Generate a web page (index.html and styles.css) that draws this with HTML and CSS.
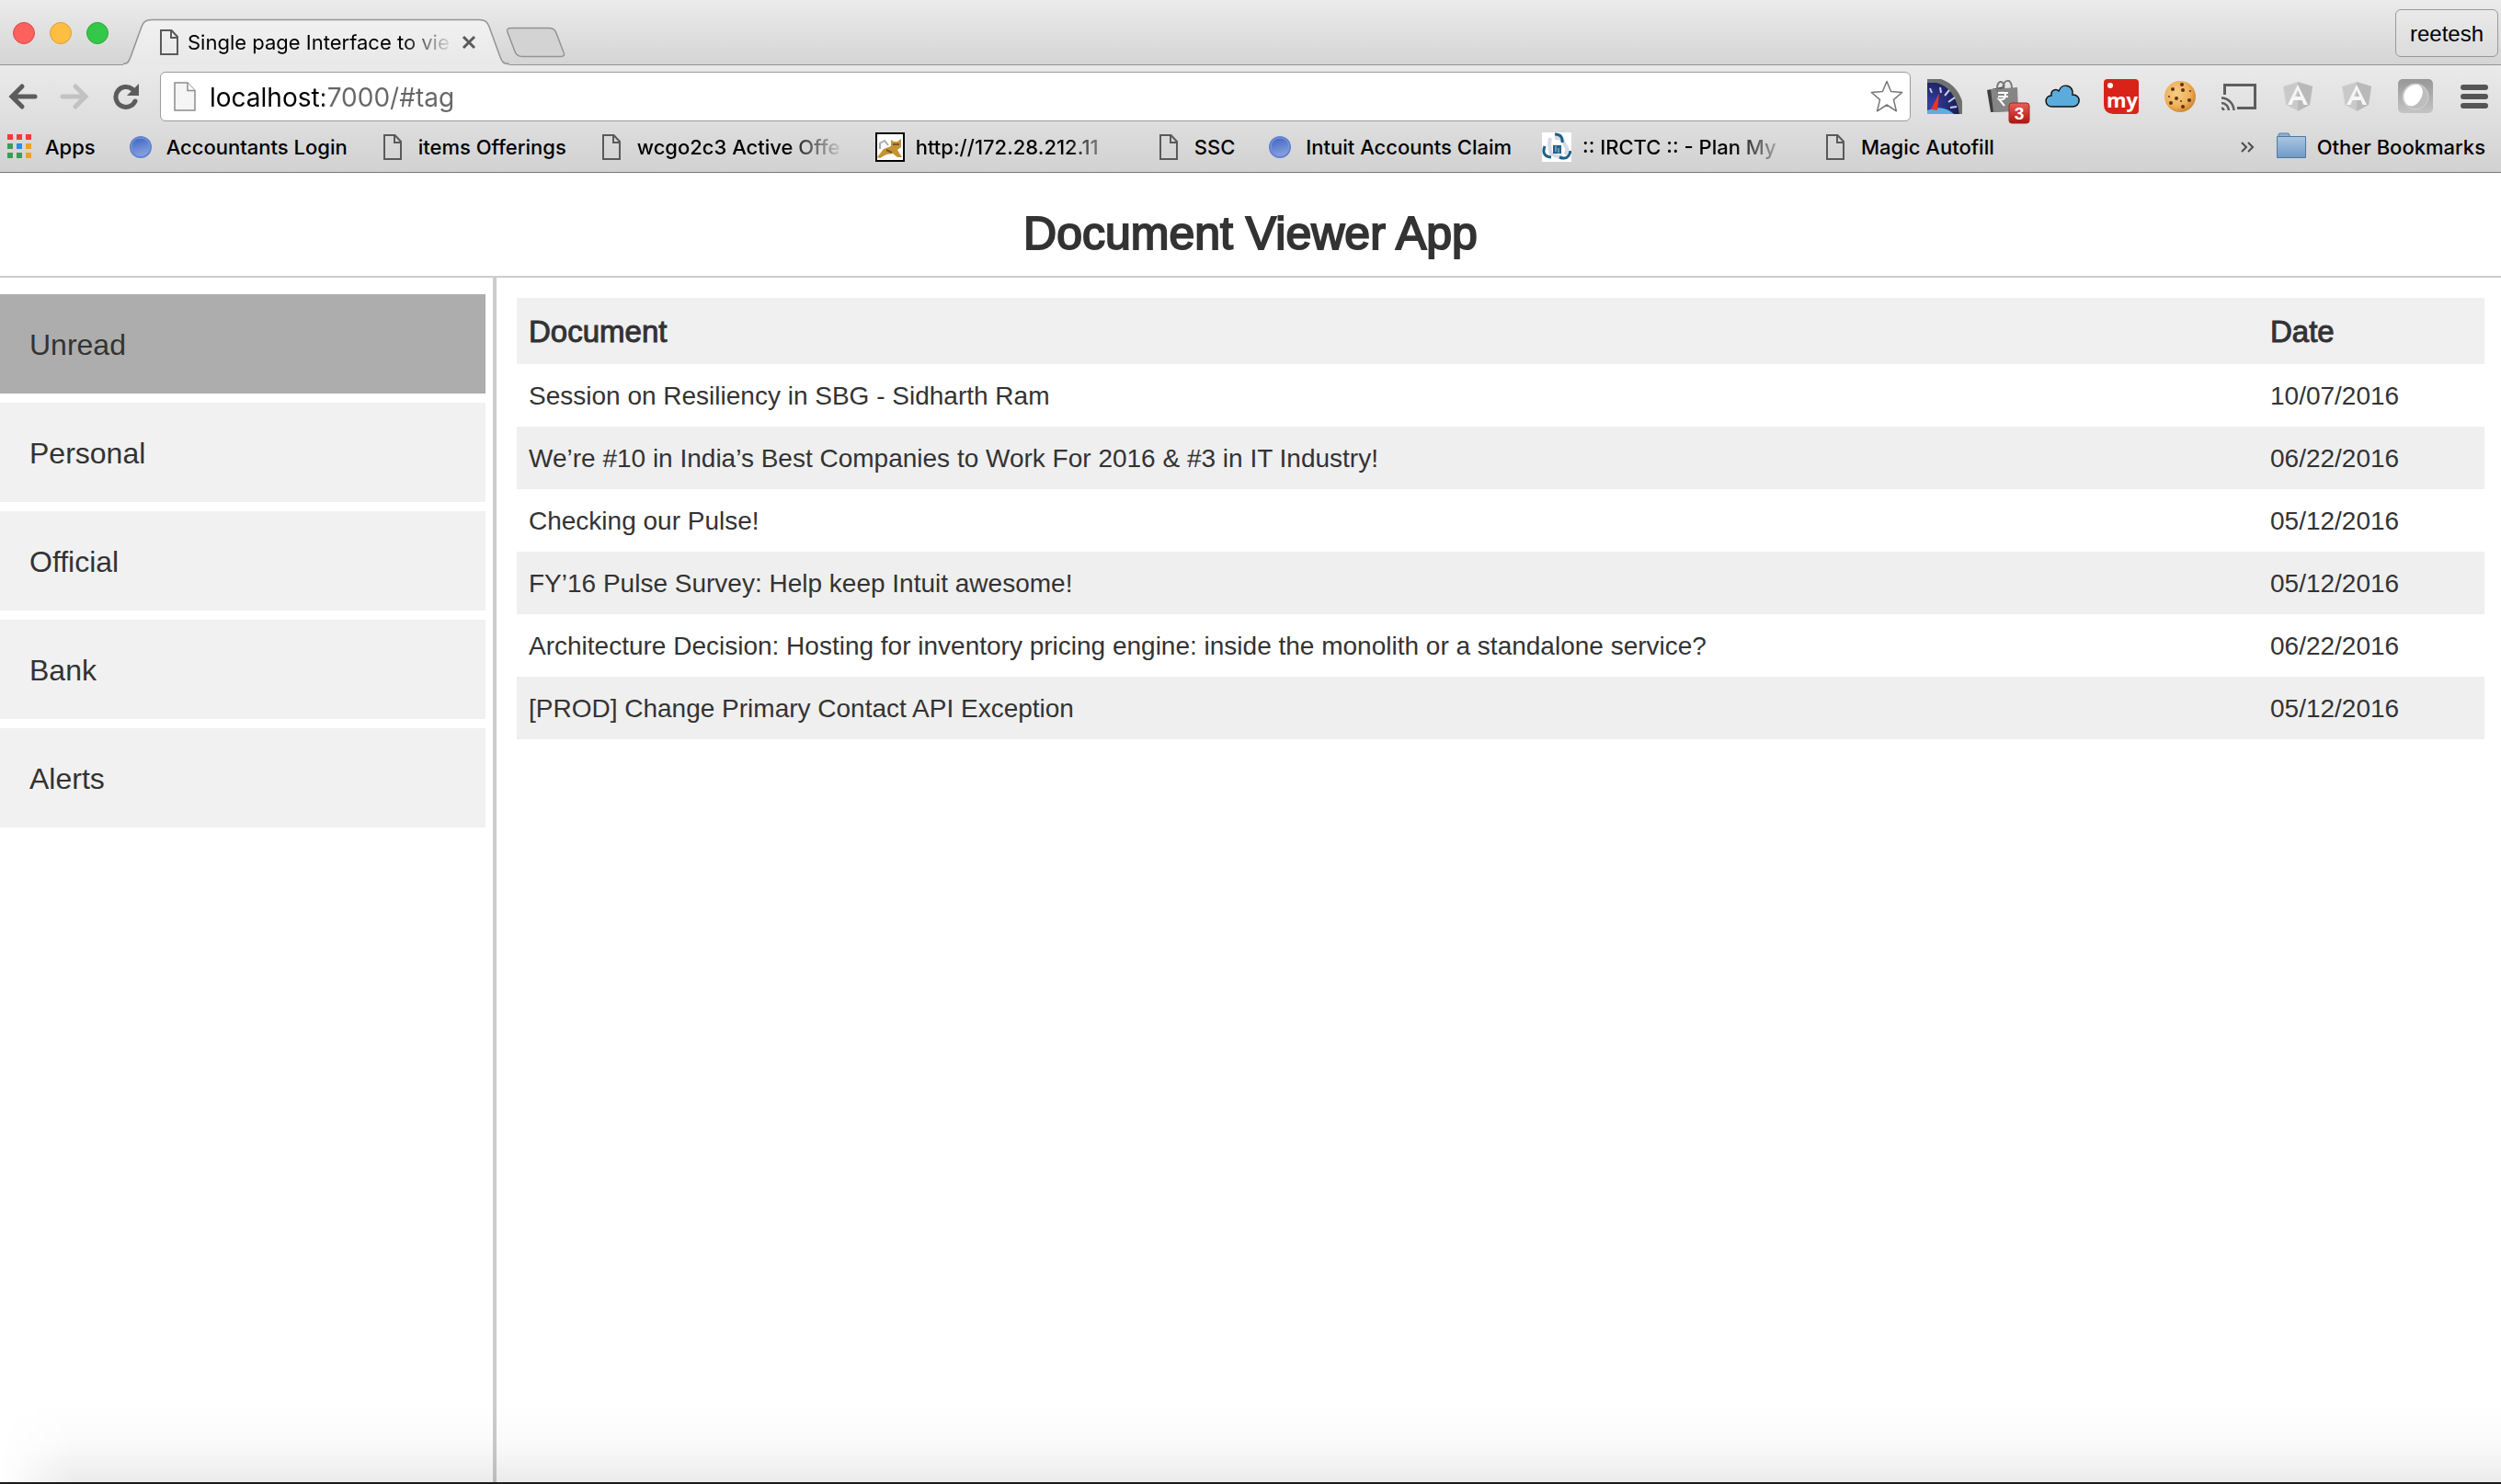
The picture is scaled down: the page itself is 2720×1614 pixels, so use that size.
FILE: index.html
```html
<!DOCTYPE html>
<html lang="en">
<head>
<meta charset="utf-8">
<title>Single page Interface to view documents</title>
<link rel="stylesheet" href="styles.css">
</head>
<body>
<svg class="defs" width="0" height="0" aria-hidden="true">
  <defs>
    <linearGradient id="ball" x1="0" y1="0" x2="0.3" y2="1"><stop offset="0" stop-color="#3d62bf"/><stop offset="1" stop-color="#839fe0"/></linearGradient>
    <linearGradient id="folder" x1="0" y1="0" x2="0" y2="1"><stop offset="0" stop-color="#abc6e2"/><stop offset="1" stop-color="#6f9ac6"/></linearGradient>
    <linearGradient id="tabfill" x1="0" y1="0" x2="0" y2="1"><stop offset="0" stop-color="#f1f1f1"/><stop offset="1" stop-color="#e8e8e8"/></linearGradient>
    <linearGradient id="badge" x1="0" y1="0" x2="0" y2="1"><stop offset="0" stop-color="#e8605a"/><stop offset="1" stop-color="#b3120f"/></linearGradient>
    <linearGradient id="orb" x1="0" y1="0" x2="0" y2="1"><stop offset="0" stop-color="#979797"/><stop offset="1" stop-color="#c4c4c4"/></linearGradient>
    <radialGradient id="dial" cx="0.1" cy="0.7" r="0.9"><stop offset="0" stop-color="#3440a8"/><stop offset="1" stop-color="#1a1c52"/></radialGradient>
    <radialGradient id="cookie" cx="0.4" cy="0.4" r="0.6"><stop offset="0" stop-color="#f8cd85"/><stop offset="0.7" stop-color="#eeb05a"/><stop offset="1" stop-color="#d58a35"/></radialGradient>
    <symbol id="doc" viewBox="0 0 32 32"><path d="M7 3H18.500L25 10V29H7Z" fill="none" stroke="#5a5a5a" stroke-width="2"/><path d="M18 3V11H25" fill="none" stroke="#5a5a5a" stroke-width="2"/></symbol>
    <symbol id="globe" viewBox="0 0 32 32"><circle cx="16" cy="16" r="12" fill="#5f80cf"/><circle cx="16" cy="16" r="10" fill="url(#ball)" stroke="#7b97dd"/></symbol>
    <symbol id="shield" viewBox="0 0 38 38"><path d="M19 3 35 8 32 28 19 35 6 28 3 8Z" fill="#c9c9c9" stroke="#dedede"/><path d="M19 3 35 8 32 28 19 35Z" fill="#b9b9b9"/><path d="M19 6 8 28H12.500L14.500 23H23.500L25.500 28H30ZM19 12 22 19H16Z" fill="#f6f6f6" fill-rule="evenodd"/></symbol>
  </defs>
</svg>

<header class="browser">
  <div class="tabstrip">
    <div class="lights"><button class="light red" aria-label="Close window"></button><button class="light amber" aria-label="Minimise window"></button><button class="light green" aria-label="Zoom window"></button></div>
    <div class="tab">
      <svg class="tab-shape" viewBox="0 0 420 51" aria-hidden="true"><path d="M0 49.500C5 49.500 6 47 8 42L20 9C22 4 24 1.500 31 1.500H387C394 1.500 396 4 398 9L410 42C412 47 413 49.500 420 49.500V51H0Z" fill="url(#tabfill)"/><path d="M0 49.500C5 49.500 6 47 8 42L20 9C22 4 24 1.500 31 1.500H387C394 1.500 396 4 398 9L410 42C412 47 413 49.500 420 49.500" fill="none" stroke="#949494" stroke-width="1.500"/></svg>
      <svg class="slot" aria-hidden="true"><use href="#doc"/></svg>
      <span class="tab-title">Single page Interface to vie</span>
      <button class="tab-close" aria-label="Close tab"><svg width="16" height="16" viewBox="0 0 16 16"><path d="M2 2 14 14M14 2 2 14" stroke="#5a5a5a" stroke-width="3"/></svg></button>
    </div>
    <button class="new-tab" aria-label="New tab"><svg width="66" height="34" viewBox="0 0 66 34"><path d="M6 1.500H47Q53 1.500 55 7L63 28Q65 32.500 60 32.500H18Q12 32.500 10 27L2 6Q0 1.500 6 1.500Z" fill="#d3d3d3" stroke="#949494" stroke-width="1.500"/></svg></button>
    <button class="profile">reetesh</button>
  </div>

  <div class="toolbar">
    <div class="nav">
      <button aria-label="Back"><svg width="34" height="30" viewBox="0 0 34 30"><path d="M30 15H6M16 4 5 15 16 26" fill="none" stroke="#5c5c5c" stroke-width="5" stroke-linecap="round" stroke-linejoin="miter"/></svg></button>
      <button aria-label="Forward"><svg width="34" height="30" viewBox="0 0 34 30"><path d="M4 15H28M18 4 29 15 18 26" fill="none" stroke="#c2c2c2" stroke-width="5" stroke-linecap="round" stroke-linejoin="miter"/></svg></button>
      <button aria-label="Reload"><svg width="34" height="30" viewBox="0 0 34 30"><path d="M27 20A11 11 0 1 1 24 7" fill="none" stroke="#5c5c5c" stroke-width="5" stroke-linecap="round"/><path d="M31 1V14H18Z" fill="#5c5c5c"/></svg></button>
    </div>
    <div class="omnibox">
      <svg width="24" height="32" viewBox="0 0 24 32" aria-hidden="true"><path d="M1 1H15L23 9.500V31H1Z" fill="#f5f5f5" stroke="#8c8c8c" stroke-width="1.500"/><path d="M15 1V9.500H23" fill="#fff" stroke="#8c8c8c" stroke-width="1.500"/></svg>
      <input class="url" type="text" aria-label="Address" value="localhost:7000/#tag">
      <button aria-label="Bookmark this page"><svg width="38" height="36" viewBox="0 0 38 36"><path d="M19 1.500 23.600 12.500 35.700 13.500 26.500 21.400 29.400 33.800 19 27 8.600 33.800 11.500 21.400 2.300 13.500 14.400 12.500Z" fill="#fff" stroke="#777" stroke-width="1.500" stroke-linejoin="round"/></svg></button>
    </div>
    <div class="extensions">
      <button aria-label="Speed test"><svg width="38" height="38" viewBox="0 0 38 38"><path d="M0 0H15Q32 6 38 24V38H0Z" fill="#6f716f"/><path d="M0 4H10Q30 9 35 38H0Z" fill="url(#dial)"/><path d="M0 34Q17 27 29 38H0Z" fill="#5aaee2"/><path d="M14 9 15 15M24 12 19 18M30 20 23 25M32 30 25 31M3 10 5 15" stroke="#c9cde8" stroke-width="2"/><path d="M13 15 4 33 11 34Z" fill="#e8342f"/></svg></button>
      <button aria-label="Shopping, 3 offers"><svg class="overflow" width="38" height="38" viewBox="0 0 38 38"><path d="M1 12 20 8 21 35 5 36Z" fill="#3d3d3d"/><path d="M5 11 34 9 35 35 8 36Z" fill="#858585"/><path d="M12 14C11 1 18 0 20 8M18 11C19-1 28-1 28 10" fill="none" stroke="#777" stroke-width="2"/><path d="M13 15H24M13 19H24M16 15Q22 14 21 19Q20 23 14 22L20 29" fill="none" stroke="#fff" stroke-width="2"/><rect x="25" y="26" width="22" height="22" rx="3" fill="url(#badge)" stroke="#a52522"/><text class="badge-text" x="36" y="44" text-anchor="middle">3</text></svg></button>
      <button aria-label="Cloud"><svg width="38" height="38" viewBox="0 0 38 38"><path d="M8 30C-1 30-1 18 7 18C6 12 12 10 15 13C19 3 32 7 30 17C40 17 39 30 30 30Z" fill="#5cacdb" stroke="#111" stroke-width="1.500"/></svg></button>
      <button aria-label="my"><svg width="38" height="38" viewBox="0 0 38 38"><path d="M4 0H34Q38 0 38 4V34Q38 38 34 38H10Q0 37 0 28V4Q0 0 4 0Z" fill="#d92318"/><circle cx="7" cy="7" r="3" fill="#fff"/><text class="my-text" x="20" y="31" text-anchor="middle">my</text></svg></button>
      <button aria-label="Cookies"><svg width="38" height="38" viewBox="0 0 38 38"><circle cx="19" cy="19" r="17" fill="url(#cookie)"/><g fill="#5b3417"><circle cx="11" cy="11" r="2"/><circle cx="21" cy="6" r="2"/><circle cx="22" cy="12" r="2"/><circle cx="30" cy="13" r="1"/><circle cx="15" cy="21" r="2"/><circle cx="29" cy="23" r="2"/><circle cx="7" cy="19" r="1"/><circle cx="9" cy="26" r="2"/><circle cx="22" cy="30" r="2"/><circle cx="20" cy="24" r="1"/></g></svg></button>
      <button aria-label="Cast"><svg width="38" height="38" viewBox="0 0 38 38"><path d="M3.500 17V6.500H36.500V31.500H17" fill="none" stroke="#5e5e5e" stroke-width="3"/><path d="M0 31.500A3 3 0 0 1 2.500 34M0 26A8.500 8.500 0 0 1 8 34M0 20.500A14 14 0 0 1 13.500 34" fill="none" stroke="#5e5e5e" stroke-width="2.500"/></svg></button>
      <button aria-label="Angular inspector"><svg width="38" height="38"><use href="#shield"/></svg></button>
      <button aria-label="Angular debugger"><svg width="38" height="38"><use href="#shield"/></svg></button>
      <button aria-label="Orb"><svg width="38" height="38" viewBox="0 0 38 38"><rect width="38" height="37" rx="5" fill="url(#orb)"/><circle cx="19" cy="19" r="14" fill="#bdbdbd" stroke="#d4d4d4"/><path d="M9 27C2 17 10 5 21 6C31 8 27 25 17 29Q11 30 9 27Z" fill="#fff"/></svg></button>
      <button aria-label="Menu"><svg width="38" height="38" viewBox="0 0 38 38"><path d="M7 9H31M7 19H31M7 29H31" stroke="#555" stroke-width="6" stroke-linecap="round"/></svg></button>
    </div>
  </div>

  <nav class="bookmarks" aria-label="Bookmarks">
    <a href="#apps"><svg class="slot" viewBox="0 0 32 32"><g fill="#ef3b3a"><path d="M3 2h6v6H3zM13 2h6v6h-6zM23 2h6v6h-6z"/></g><path d="M3 12h6v6H3zM3 22h6v6H3zM13 22h6v6h-6z" fill="#3b9c55"/><path d="M13 12h6v6h-6z" fill="#2b8cf0"/><path d="M23 12h6v6h-6zM23 22h6v6h-6z" fill="#eda12b"/></svg><span>Apps</span></a>
    <a href="#accountants"><svg class="slot"><use href="#globe"/></svg><span>Accountants Login</span></a>
    <a href="#items"><svg class="slot"><use href="#doc"/></svg><span>items Offerings</span></a>
    <a href="#wcgo"><svg class="slot"><use href="#doc"/></svg><span class="fade">wcgo2c3 Active Offe</span></a>
    <a href="#tomcat"><svg class="slot" viewBox="0 0 32 32"><path d="M1 1H31V31H1Z" fill="#fff" stroke="#000" stroke-width="2"/><path d="M17 8 20 10H24L28 7V16L24 19 29 27H24L19 23 12 24 5 28 2 27 9 18 17 15Z" fill="#c59336"/><path d="M5 18V12L10 9 14 14" fill="none" stroke="#aaa" stroke-width="2"/><path d="M19 13H26M12 19 18 22" stroke="#725a2c" stroke-width="2"/></svg><span class="fade">http://172.28.212.11</span></a>
    <a href="#ssc"><svg class="slot"><use href="#doc"/></svg><span>SSC</span></a>
    <a href="#claim"><svg class="slot"><use href="#globe"/></svg><span>Intuit Accounts Claim</span></a>
    <a href="#irctc"><svg class="slot" viewBox="0 0 32 32"><path d="M0 0H32V32H0Z" fill="#fff"/><path d="M9 6Q7 14 10 25M24 12Q30 19 25 24M9 22Q15 27 22 26M14 6Q22 5 24 12" fill="none" stroke="#d5dae5" stroke-width="4"/><path d="M14 2Q23 2 22 11M3 15Q-1 26 10 27M31 20Q29 31 19 27" fill="none" stroke="#1d5f86" stroke-width="3"/><path d="M12 14H21V23H12Z" fill="#24608b"/><path d="M15 15V21M18 17V22" stroke="#b9cfdd"/></svg><span class="fade">:: IRCTC :: - Plan My</span></a>
    <a href="#autofill"><svg class="slot"><use href="#doc"/></svg><span>Magic Autofill</span></a>
    <button class="more" aria-label="More bookmarks"><svg width="16" height="14" viewBox="0 0 16 14"><path d="M2 2 7 7 2 12M9 2 14 7 9 12" fill="none" stroke="#4d4d4d" stroke-width="2"/></svg></button>
    <a href="#other"><svg class="slot" viewBox="0 0 32 32"><path d="M2 6V2Q2 1 4 1H12Q14 1 14 3V6" fill="#8fb0d6" stroke="#5b7ea6"/><path d="M.5 4.500H31.500V27.500H.5Z" fill="url(#folder)" stroke="#4e799f"/></svg><span>Other Bookmarks</span></a>
  </nav>
</header>

<div class="app">
  <h1>Document Viewer App</h1>
  <div class="columns">
    <nav class="tags" aria-label="Tags">
      <a class="current" href="#unread">Unread</a>
      <a href="#personal">Personal</a>
      <a href="#official">Official</a>
      <a href="#bank">Bank</a>
      <a href="#alerts">Alerts</a>
    </nav>
    <main>
      <table>
        <thead><tr><th scope="col">Document</th><th class="date" scope="col">Date</th></tr></thead>
        <tbody>
          <tr><td>Session on Resiliency in SBG - Sidharth Ram</td><td>10/07/2016</td></tr>
          <tr><td>We’re #10 in India’s Best Companies to Work For 2016 &amp; #3 in IT Industry!</td><td>06/22/2016</td></tr>
          <tr><td>Checking our Pulse!</td><td>05/12/2016</td></tr>
          <tr><td>FY’16 Pulse Survey: Help keep Intuit awesome!</td><td>05/12/2016</td></tr>
          <tr><td>Architecture Decision: Hosting for inventory pricing engine: inside the monolith or a standalone service?</td><td>06/22/2016</td></tr>
          <tr><td>[PROD] Change Primary Contact API Exception</td><td>05/12/2016</td></tr>
        </tbody>
      </table>
    </main>
  </div>
</div>
</body>
</html>
```
FILE: styles.css
```css
* { box-sizing: border-box; }

body {
  margin: 0;
  min-height: 100vh;
  display: flex;
  flex-direction: column;
  background: #fff;
  color: #333;
  font-family: "Liberation Sans", Arial, sans-serif;
  border-bottom: 2px solid #1a1a1a;
}

button {
  margin: 0;
  padding: 0;
  border: 0;
  background: none;
  font: inherit;
}

svg { display: block; flex: none; }
a { color: inherit; text-decoration: none; }
.defs { position: absolute; }
.overflow { overflow: visible; }
.slot { width: 32px; height: 32px; }

/* Browser window */
.browser {
  font-family: Inter, Roboto, sans-serif;
  font-size: 22px;
  color: #000;
  border-bottom: 1px solid #777;
}

.tabstrip {
  height: 71px;
  display: flex;
  align-items: flex-end;
  padding-right: 3px;
  background: linear-gradient(#ebebeb, #d4d4d4);
  box-shadow: inset 0 -1px #949494;
}

.lights {
  display: flex;
  gap: 16px;
  padding: 0 0 23px 14px;
  width: 134px;
}

.light { width: 24px; height: 24px; border-radius: 50%; border: 1px solid; }
.red { background: #fc615d; border-color: #e04845; }
.amber { background: #fdbe41; border-color: #dea035; }
.green { background: #34c84a; border-color: #28ab36; }

.tab {
  position: relative;
  width: 420px;
  height: 51px;
  display: flex;
  align-items: center;
  padding: 0 36px 0 34px;
}

.tab-shape { position: absolute; left: 0; top: 0; width: 100%; height: 100%; }
.tab .slot { position: relative; }

.tab-title {
  position: relative;
  flex: 1;
  margin: 0 8px 0 4px;
  white-space: nowrap;
  mask-image: linear-gradient(90deg, #000 80%, transparent);
}

.tab-close { position: relative; }
.new-tab { margin: 0 auto 8px -4px; }

.profile {
  height: 52px;
  margin-bottom: 9px;
  padding: 2px 15px 0;
  border: 1px solid #999;
  border-radius: 6px;
  background: linear-gradient(#e9e9e9, #dcdcdc);
  color: #000;
  font-family: "Liberation Sans", Arial, sans-serif;
  font-size: 24px;
}

.toolbar {
  display: flex;
  align-items: center;
  gap: 18px;
  padding: 7px 10px 0 8px;
  background: linear-gradient(#eaeaea, #dedede);
}

.nav { display: flex; gap: 22px; width: 148px; }

.omnibox {
  flex: 1;
  height: 54px;
  display: flex;
  align-items: center;
  padding: 0 6px 0 14px;
  background: #fff;
  border: 1px solid #9b9b9b;
  border-radius: 6px;
}

.url {
  flex: 1;
  min-width: 0;
  margin-left: 15px;
  padding: 2px 0 0;
  border: 0;
  outline: 0;
  font-family: Inter, Roboto, sans-serif;
  font-size: 28px;
  line-height: 40px;
  color: transparent;
  /* host in black, the rest of the address in grey */
  background: linear-gradient(90deg, #000 124px, #666 124px);
  background-clip: text;
}

.badge-text { fill: #fff; font: bold 19px "Liberation Sans", Arial, sans-serif; }
.my-text { fill: #fff; font: bold 22px "Open Sans", sans-serif; }

.extensions { display: flex; gap: 26px; }

.bookmarks {
  height: 55px;
  display: flex;
  align-items: center;
  gap: 33px;
  padding: 0 17px 0 5px;
  background: linear-gradient(#dedede, #d1d1d1);
  font-weight: 500;
}

.bookmarks a { display: flex; align-items: center; gap: 12px; white-space: nowrap; }

.fade {
  width: 226px;
  mask-image: linear-gradient(90deg, #000 72%, transparent);
}

.more { margin-left: auto; margin-right: -9px; }

/* Document viewer */
.app {
  position: relative;
  flex: 1;
  display: flex;
  flex-direction: column;
}

.app::after {
  content: "";
  position: absolute;
  inset: auto 0 0 0;
  height: 84px;
  background: linear-gradient(rgba(0, 0, 0, 0), rgba(0, 0, 0, 0.02) 50%, rgba(0, 0, 0, 0.08));
  mask-image: linear-gradient(90deg, transparent, #000 80px);
  pointer-events: none;
}

h1 {
  margin: 0;
  padding: 38px 0 18px;
  border-bottom: 2px solid #ccc;
  font-size: 50px;
  line-height: 56px;
  font-weight: 400;
  text-align: center;
  -webkit-text-stroke: 2px #333;
}

.columns { flex: 1; display: flex; }

.tags {
  width: 540px;
  padding: 18px 8px 0 0;
  display: flex;
  flex-direction: column;
  gap: 10px;
  border-right: 4px solid #ccc;
}

.tags a {
  padding: 37px 32px 35px;
  background: #f1f1f1;
  font-size: 32px;
  line-height: 36px;
}

.tags .current { background: #adadad; }

main { flex: 1; padding: 22px 18px 0 22px; }

table { width: 100%; border-collapse: collapse; font-size: 28px; }

th, td { height: 68px; padding: 2px 13px 0; text-align: left; }

th {
  height: 72px;
  background: #f0f0f0;
  font-size: 33px;
  font-weight: 400;
  -webkit-text-stroke: 1px #333;
}

.date { width: 246px; }
tbody tr:nth-child(even) { background: #efefef; }
```
